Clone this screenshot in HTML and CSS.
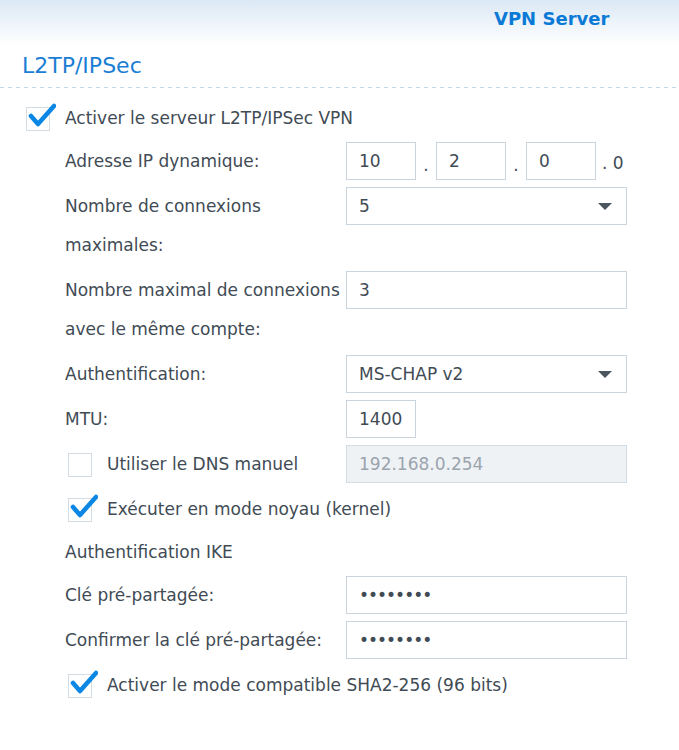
FILE: index.html
```html
<!DOCTYPE html>
<html lang="fr">
<head>
    <meta charset="UTF-8">
    <meta name="viewport" content="width=device-width, initial-scale=1.0">
    <title>VPN Server</title>
    <link rel="stylesheet" href="styles.css">
</head>
<body>
    <header class="topbar">
        <span class="app-title">VPN Server</span>
    </header>
    <main class="panel">
        <h2 class="section-title">L2TP/IPSec</h2>
        <div class="divider"></div>

        <label class="check-row main-check">
            <span class="box checked">
                <svg viewBox="0 0 28 26"><path d="M3 13 L10 21 L26 3"/></svg>
            </span>
            <span>Activer le serveur L2TP/IPSec VPN</span>
        </label>

        <div class="fields">
            <div class="row">
                <span class="label">Adresse IP dynamique:</span>
                <div class="ip">
                    <input class="field short" value="10">
                    <span class="sep">.</span>
                    <input class="field short" value="2">
                    <span class="sep">.</span>
                    <input class="field short" value="0">
                    <span class="sep last">. 0</span>
                </div>
            </div>
            <div class="row">
                <span class="label">Nombre de connexions maximales:</span>
                <div class="field select">
                    <span>5</span>
                    <svg class="caret" viewBox="0 0 14 7"><path d="M0 0 H14 L7 7 Z"/></svg>
                </div>
            </div>
            <div class="row">
                <span class="label">Nombre maximal de connexions avec le même compte:</span>
                <input class="field" value="3">
            </div>
            <div class="row">
                <span class="label">Authentification:</span>
                <div class="field select">
                    <span>MS-CHAP v2</span>
                    <svg class="caret" viewBox="0 0 14 7"><path d="M0 0 H14 L7 7 Z"/></svg>
                </div>
            </div>
            <div class="row">
                <span class="label">MTU:</span>
                <input class="field short" value="1400">
            </div>
            <div class="row">
                <label class="label check-row sub-check">
                    <span class="box"></span>
                    <span>Utiliser le DNS manuel</span>
                </label>
                <input class="field" value="192.168.0.254" disabled>
            </div>
            <div class="row">
                <label class="check-row sub-check">
                    <span class="box checked">
                        <svg viewBox="0 0 28 26"><path d="M3 13 L10 21 L26 3"/></svg>
                    </span>
                    <span>Exécuter en mode noyau (kernel)</span>
                </label>
            </div>
            <div class="row group-title">
                <span class="label">Authentification IKE</span>
            </div>
            <div class="row">
                <span class="label">Clé pré-partagée:</span>
                <input class="field secret" type="password" value="12345678">
            </div>
            <div class="row">
                <span class="label">Confirmer la clé pré-partagée:</span>
                <input class="field secret" type="password" value="12345678">
            </div>
            <div class="row">
                <label class="check-row sub-check">
                    <span class="box checked">
                        <svg viewBox="0 0 28 26"><path d="M3 13 L10 21 L26 3"/></svg>
                    </span>
                    <span>Activer le mode compatible SHA2-256 (96 bits)</span>
                </label>
            </div>
        </div>
    </main>
</body>
</html>
```

FILE: styles.css
```css
body {
    margin: 0;
    font-family: "DejaVu Sans", Verdana, sans-serif;
    font-size: 17px;
    color: #414b55;
    background: #fff;
}
.topbar {
    height: 45px;
    padding-left: 494px;
    display: flex;
    align-items: center;
    background: linear-gradient(#dbe8f5, #fff);
}
.app-title {
    color: #0b79d6;
    font-weight: bold;
    font-size: 18px;
    margin-top: -8px;
}
.section-title {
    margin: 0;
    padding: 8px 22px 8px;
    font-size: 22px;
    line-height: 26px;
    font-weight: normal;
    color: #1a7ed4;
}
.divider {
    height: 1px;
    background: repeating-linear-gradient(to right, #c5d6e8 0 4px, transparent 4px 8px);
}
.check-row {
    display: flex;
    align-items: center;
    gap: 15px;
    line-height: 39px;
}
.main-check {
    margin: 11px 0 0 26px;
}
.sub-check {
    margin-left: 3px;
}
.box {
    position: relative;
    width: 22px;
    height: 22px;
    border: 1px solid #d3dbe3;
    flex-shrink: 0;
}
.box svg {
    position: absolute;
    left: 1px;
    top: -5px;
    width: 28px;
    height: 26px;
    fill: none;
    stroke: #0a86e4;
    stroke-width: 4.5;
    stroke-linejoin: round;
    stroke-linecap: round;
}
.fields {
    display: flex;
    flex-direction: column;
    gap: 6px;
    margin-top: 4px;
    padding-left: 65px;
}
.row {
    display: flex;
    align-items: flex-start;
}
.label {
    width: 281px;
    flex-shrink: 0;
    line-height: 39px;
}
.fields .label.check-row {
    width: 278px;
}
.group-title .label {
    line-height: 35px;
}
.field {
    box-sizing: border-box;
    width: 281px;
    height: 38px;
    padding: 0 12px;
    border: 1px solid #c9d4df;
    font-family: inherit;
    font-size: 17px;
    color: #414b55;
    background: #fff;
    outline: none;
}
.field.short {
    width: 70px;
}
.field:disabled {
    background: #eff2f5;
    color: #9aa4ae;
    border-color: #d3dbe3;
}
.field.secret {
    letter-spacing: -1px;
}
.ip {
    display: flex;
    align-items: flex-end;
}
.sep {
    width: 20px;
    text-align: center;
    line-height: 30px;
}
.sep.last {
    width: auto;
    padding-left: 6px;
    line-height: 34px;
}
.select {
    display: flex;
    align-items: center;
    justify-content: space-between;
    padding-right: 14px;
}
.caret {
    width: 14px;
    height: 7px;
    fill: #4a5560;
}
```
